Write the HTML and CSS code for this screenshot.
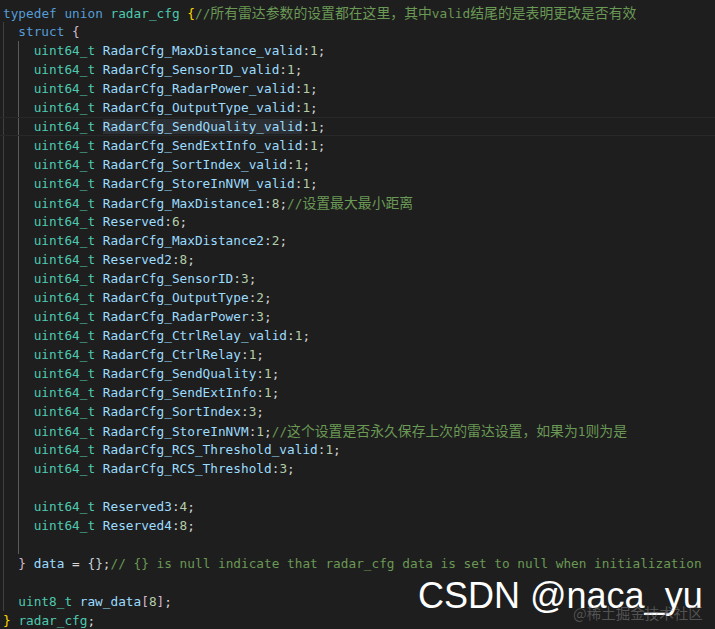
FILE: index.html
```html
<!DOCTYPE html>
<html lang="zh-CN">
<head>
<meta charset="utf-8">
<title>radar_cfg</title>
<link rel="stylesheet" href="styles.css">
</head>
<body>
<div class="editor">
<div class="line"><span class="kw">typedef</span> <span class="kw">union</span> <span class="ty">radar_cfg</span> <span class="b0">{</span><span class="cm">//<span class="zh">所有雷达参数的设置都在这里，其中</span>valid<span class="zh">结尾的是表明更改是否有效</span></span></div>
<div class="line"><span class="ig"></span><span class="kw">struct</span> <span class="b1">{</span></div>
<div class="line"><span class="ig"></span><span class="ig act"></span><span class="ty">uint64_t</span> <span class="va">RadarCfg_MaxDistance_valid</span>:<span class="nu">1</span>;</div>
<div class="line"><span class="ig"></span><span class="ig act"></span><span class="ty">uint64_t</span> <span class="va">RadarCfg_SensorID_valid</span>:<span class="nu">1</span>;</div>
<div class="line"><span class="ig"></span><span class="ig act"></span><span class="ty">uint64_t</span> <span class="va">RadarCfg_RadarPower_valid</span>:<span class="nu">1</span>;</div>
<div class="line"><span class="ig"></span><span class="ig act"></span><span class="ty">uint64_t</span> <span class="va">RadarCfg_OutputType_valid</span>:<span class="nu">1</span>;</div>
<div class="line current"><span class="ig"></span><span class="ig act"></span><span class="ty">uint64_t</span> <span class="va hl">RadarCfg_SendQuality_valid</span>:<span class="nu">1</span>;</div>
<div class="line"><span class="ig"></span><span class="ig act"></span><span class="ty">uint64_t</span> <span class="va">RadarCfg_SendExtInfo_valid</span>:<span class="nu">1</span>;</div>
<div class="line"><span class="ig"></span><span class="ig act"></span><span class="ty">uint64_t</span> <span class="va">RadarCfg_SortIndex_valid</span>:<span class="nu">1</span>;</div>
<div class="line"><span class="ig"></span><span class="ig act"></span><span class="ty">uint64_t</span> <span class="va">RadarCfg_StoreInNVM_valid</span>:<span class="nu">1</span>;</div>
<div class="line"><span class="ig"></span><span class="ig act"></span><span class="ty">uint64_t</span> <span class="va">RadarCfg_MaxDistance1</span>:<span class="nu">8</span>;<span class="cm">//<span class="zh">设置最大最小距离</span></span></div>
<div class="line"><span class="ig"></span><span class="ig act"></span><span class="ty">uint64_t</span> <span class="va">Reserved</span>:<span class="nu">6</span>;</div>
<div class="line"><span class="ig"></span><span class="ig act"></span><span class="ty">uint64_t</span> <span class="va">RadarCfg_MaxDistance2</span>:<span class="nu">2</span>;</div>
<div class="line"><span class="ig"></span><span class="ig act"></span><span class="ty">uint64_t</span> <span class="va">Reserved2</span>:<span class="nu">8</span>;</div>
<div class="line"><span class="ig"></span><span class="ig act"></span><span class="ty">uint64_t</span> <span class="va">RadarCfg_SensorID</span>:<span class="nu">3</span>;</div>
<div class="line"><span class="ig"></span><span class="ig act"></span><span class="ty">uint64_t</span> <span class="va">RadarCfg_OutputType</span>:<span class="nu">2</span>;</div>
<div class="line"><span class="ig"></span><span class="ig act"></span><span class="ty">uint64_t</span> <span class="va">RadarCfg_RadarPower</span>:<span class="nu">3</span>;</div>
<div class="line"><span class="ig"></span><span class="ig act"></span><span class="ty">uint64_t</span> <span class="va">RadarCfg_CtrlRelay_valid</span>:<span class="nu">1</span>;</div>
<div class="line"><span class="ig"></span><span class="ig act"></span><span class="ty">uint64_t</span> <span class="va">RadarCfg_CtrlRelay</span>:<span class="nu">1</span>;</div>
<div class="line"><span class="ig"></span><span class="ig act"></span><span class="ty">uint64_t</span> <span class="va">RadarCfg_SendQuality</span>:<span class="nu">1</span>;</div>
<div class="line"><span class="ig"></span><span class="ig act"></span><span class="ty">uint64_t</span> <span class="va">RadarCfg_SendExtInfo</span>:<span class="nu">1</span>;</div>
<div class="line"><span class="ig"></span><span class="ig act"></span><span class="ty">uint64_t</span> <span class="va">RadarCfg_SortIndex</span>:<span class="nu">3</span>;</div>
<div class="line"><span class="ig"></span><span class="ig act"></span><span class="ty">uint64_t</span> <span class="va">RadarCfg_StoreInNVM</span>:<span class="nu">1</span>;<span class="cm">//<span class="zh">这个设置是否永久保存上次的雷达设置，如果为</span>1<span class="zh">则为是</span></span></div>
<div class="line"><span class="ig"></span><span class="ig act"></span><span class="ty">uint64_t</span> <span class="va">RadarCfg_RCS_Threshold_valid</span>:<span class="nu">1</span>;</div>
<div class="line"><span class="ig"></span><span class="ig act"></span><span class="ty">uint64_t</span> <span class="va">RadarCfg_RCS_Threshold</span>:<span class="nu">3</span>;</div>
<div class="line"><span class="ig"></span><span class="ig act"></span></div>
<div class="line"><span class="ig"></span><span class="ig act"></span><span class="ty">uint64_t</span> <span class="va">Reserved3</span>:<span class="nu">4</span>;</div>
<div class="line"><span class="ig"></span><span class="ig act"></span><span class="ty">uint64_t</span> <span class="va">Reserved4</span>:<span class="nu">8</span>;</div>
<div class="line"><span class="ig"></span><span class="ig act"></span></div>
<div class="line"><span class="ig"></span><span class="b1">}</span> <span class="va">data</span> = <span class="b2">{}</span>;<span class="cm">// {} is null indicate that radar_cfg data is set to null when initialization</span></div>
<div class="line"><span class="ig"></span></div>
<div class="line"><span class="ig"></span><span class="ty">uint8_t</span> <span class="va">raw_data</span><span class="b1">[</span><span class="nu">8</span><span class="b1">]</span>;</div>
<div class="line"><span class="b0">}</span> <span class="ty">radar_cfg</span>;</div>
</div>
<div class="wm-csdn">CSDN @naca_yu</div>
<div class="wm-juejin">@稀土掘金技术社区</div>
</body>
</html>
```
FILE: styles.css
```css
html, body {
  margin: 0;
  padding: 0;
  background: #1e1e1e;
  width: 715px;
  height: 629px;
  overflow: hidden;
}

body {
  position: relative;
}

.editor {
  padding: 2.5px 0 0 3px;
  font-family: "DejaVu Sans Mono", "Noto Sans CJK SC", monospace;
  font-size: 12.75px;
  color: #d4d4d4;
}

.line {
  height: 19px;
  line-height: 19px;
  white-space: pre;
  box-sizing: border-box;
}

.line.current {
  margin-left: -3px;
  padding-left: 3px;
  border-top: 1px solid #282828;
  border-bottom: 1px solid #282828;
  line-height: 17px;
}

.ig {
  display: inline-block;
  width: 2ch;
  height: 19px;
  vertical-align: top;
  box-sizing: border-box;
  border-left: 1px solid #404040;
}

.line.current .ig {
  height: 17px;
}

.ig.act {
  border-left-color: #5a5a5a;
}

.kw { color: #569cd6; }
.ty { color: #4ec9b0; }
.va { color: #9cdcfe; }
.nu { color: #b5cea8; }
.cm { color: #6a9955; }
.b0 { color: #ffd700; }
.b1 { color: #d4b8d0; }
.b2 { color: #c8d4dc; }

.hl {
  background: #2c3034;
}

.zh {
  font-family: "Noto Sans CJK SC", sans-serif;
  font-size: 13.85px;
}

.wm-csdn {
  position: absolute;
  left: 418px;
  top: 574px;
  font-family: "Liberation Sans", Arial, sans-serif;
  font-size: 36px;
  line-height: 44px;
  color: #ffffff;
  white-space: nowrap;
}

.wm-juejin {
  position: absolute;
  left: 573px;
  top: 603px;
  font-family: "Noto Sans CJK SC", sans-serif;
  font-size: 14.5px;
  line-height: 20px;
  color: rgba(150, 150, 150, 0.45);
  white-space: nowrap;
}
```
